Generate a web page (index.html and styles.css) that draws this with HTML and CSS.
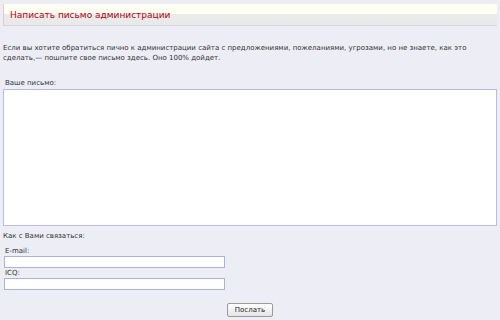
FILE: index.html
```html
<!DOCTYPE html>
<html lang="ru">
<head>
    <meta charset="UTF-8">
    <title>Написать письмо администрации</title>
    <link rel="stylesheet" href="styles.css">
</head>
<body>
    <div class="page">
        <div class="title-bar">
            <div class="title">Написать письмо администрации</div>
        </div>

        <p class="intro">Если вы хотите обратиться пично к администрации сайта с предложениями, пожеланиями, угрозами, но не знаете, как это сделать,— пошпите свое письмо здесь. Оно 100% дойдет.</p>

        <form class="mail-form">
            <label class="label label-letter">Ваше письмо:</label>
            <textarea class="letter"></textarea>

            <div class="contact">Как с Вами связаться:</div>

            <label class="label">E-mail:</label>
            <input type="text" class="field">

            <label class="label">ICQ:</label>
            <input type="text" class="field">

            <div class="submit-row">
                <button type="button" class="send-btn">Послать</button>
            </div>
        </form>
    </div>
</body>
</html>
```

FILE: styles.css
```css
body {
    margin: 0;
    background-color: #EDEDF5;
    font-family: "DejaVu Sans", Verdana, sans-serif;
    font-size: 7px;
    color: #333;
}
.page {
    padding: 4px 3px 0 3px;
}
.title-bar {
    height: 21px;
    border-left: 1px solid #E8C8C8;
    border-bottom: 1px solid #D6D6DA;
    background: linear-gradient(to bottom, #FFFFF4 0%, #FFFFF2 45%, #EBEBEB 50%, #E9E9EA 100%);
    display: flex;
    align-items: center;
    padding-left: 6px;
}
.title {
    font-family: "DejaVu Sans", Verdana, sans-serif;
    font-size: 9px;
    color: #B00010;
}
.intro {
    margin: 17px 0 0 0;
    line-height: 10px;
    width: 494px;
}
.mail-form {
    display: flex;
    flex-direction: column;
    align-items: flex-start;
    margin-top: 16px;
}
.label {
    line-height: 9px;
    padding-left: 2px;
}
.label-letter {
    margin-bottom: 1px;
}
.letter {
    width: 494px;
    height: 137px;
    box-sizing: border-box;
    margin: 0;
    border: 1px solid #B8BCE4;
    background: #FFFFFF;
    resize: none;
}
.contact {
    margin-top: 5px;
    margin-bottom: 6px;
    line-height: 10px;
}
.field {
    width: 221px;
    height: 12px;
    box-sizing: border-box;
    margin: 0 0 1px 1px;
    padding: 0;
    border: 1px solid #A8B2DC;
    background: #FFFFFF;
}
.submit-row {
    align-self: stretch;
    display: flex;
    justify-content: center;
    margin-top: 12px;
}
.send-btn {
    font-family: "DejaVu Sans", Verdana, sans-serif;
    font-size: 7px;
    color: #222;
    width: 46px;
    height: 14px;
    padding: 0;
    border: 1px solid #9A9A9A;
    border-radius: 2px;
    background: linear-gradient(to bottom, #FFFFFF, #E4E4E4);
}
```
